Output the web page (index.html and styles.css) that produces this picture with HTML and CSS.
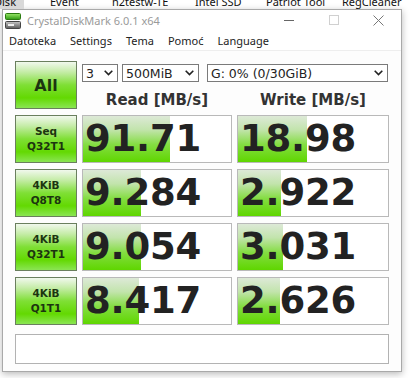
FILE: index.html
```html
<!DOCTYPE html>
<html>
<head>
<meta charset="utf-8">
<link rel="stylesheet" href="styles.css">
</head>
<body>
<div class="desk">
  <div class="desk-row">
    <span class="task t-disk"><span class="hl">Disk</span></span>
    <span class="task t-event">Event</span>
    <span class="task t-h2">h2testw-TE</span>
    <span class="task t-intel">Intel SSD</span>
    <span class="task t-patriot">Patriot Tool</span>
    <span class="task">RegCleaner</span>
  </div>
</div>
<div class="win">
  <div class="title">
    <svg class="appicon" width="16" height="16" viewBox="0 0 16 16">
      <defs>
        <linearGradient id="g1" x1="0" y1="0" x2="0" y2="1">
          <stop offset="0" stop-color="#9be86a"/>
          <stop offset="1" stop-color="#2e9a12"/>
        </linearGradient>
        <linearGradient id="g2" x1="0" y1="0" x2="0" y2="1">
          <stop offset="0" stop-color="#c8c8c8"/>
          <stop offset="1" stop-color="#5a5a5a"/>
        </linearGradient>
      </defs>
      <rect x="0.5" y="0.5" width="15" height="6" rx="1" fill="url(#g1)" stroke="#2a7a10" stroke-width="1"/>
      <rect x="0.5" y="8.5" width="15" height="7" rx="1" fill="url(#g2)" stroke="#444" stroke-width="1"/>
      <rect x="3" y="11" width="6" height="2" fill="#eee"/>
    </svg>
    <span class="ttext">CrystalDiskMark 6.0.1 x64</span>
    <div class="ctrls">
      <div class="cbtn"><svg width="10" height="10" viewBox="0 0 10 10"><path d="M0 5.5H10" stroke="#666" stroke-width="1"/></svg></div>
      <div class="cbtn"><svg width="10" height="10" viewBox="0 0 10 10"><rect x="0.5" y="0.5" width="9" height="9" fill="none" stroke="#d0d0d0" stroke-width="1"/></svg></div>
      <div class="cbtn"><svg width="11" height="11" viewBox="0 0 11 11"><path d="M0.5 0.5L10.5 10.5M10.5 0.5L0.5 10.5" stroke="#777" stroke-width="1"/></svg></div>
    </div>
  </div>
  <div class="menu">
    <span>Datoteka</span>
    <span>Settings</span>
    <span>Tema</span>
    <span>Pomoć</span>
    <span>Language</span>
  </div>
  <div class="client">
    <div class="grid">
      <div class="btn all">All</div>
      <div class="top">
        <div class="selects">
          <div class="sel sel-count"><span>3</span><svg class="chev" width="9" height="6" viewBox="0 0 9 6"><path d="M0.7 0.7L4.5 4.5L8.3 0.7" fill="none" stroke="#222" stroke-width="1.6"/></svg></div>
          <div class="sel sel-size"><span>500MiB</span><svg class="chev" width="9" height="6" viewBox="0 0 9 6"><path d="M0.7 0.7L4.5 4.5L8.3 0.7" fill="none" stroke="#222" stroke-width="1.6"/></svg></div>
          <div class="sel sel-drive"><span>G: 0% (0/30GiB)</span><svg class="chev" width="9" height="6" viewBox="0 0 9 6"><path d="M0.7 0.7L4.5 4.5L8.3 0.7" fill="none" stroke="#222" stroke-width="1.6"/></svg></div>
        </div>
        <div class="heads">
          <div>Read [MB/s]</div>
          <div>Write [MB/s]</div>
        </div>
      </div>

      <div class="btn test">Seq<br>Q32T1</div>
      <div class="cell" style="background-size:87px 100%">91.71</div>
      <div class="cell" style="background-size:69px 100%">18.98</div>

      <div class="btn test">4KiB<br>Q8T8</div>
      <div class="cell" style="background-size:58px 100%">9.284</div>
      <div class="cell" style="background-size:43px 100%">2.922</div>

      <div class="btn test">4KiB<br>Q32T1</div>
      <div class="cell" style="background-size:58px 100%">9.054</div>
      <div class="cell" style="background-size:45px 100%">3.031</div>

      <div class="btn test">4KiB<br>Q1T1</div>
      <div class="cell" style="background-size:56px 100%">8.417</div>
      <div class="cell" style="background-size:42px 100%">2.626</div>
    </div>
    <div class="status"></div>
  </div>
</div>
</body>
</html>
```

FILE: styles.css
```css
html, body {
  margin: 0;
  padding: 0;
}
body {
  width: 411px;
  height: 378px;
  overflow: hidden;
  background: #ffffff;
  font-family: "DejaVu Sans", sans-serif;
}

/* desktop strip behind the window */
.desk {
  height: 9px;
  overflow: hidden;
  font-family: "Noto Sans", sans-serif;
  font-size: 11px;
  color: #111;
}
.desk-row {
  display: flex;
  margin-top: -6px;
  line-height: 15px;
  white-space: nowrap;
}
.task { flex-shrink: 0; }
.t-disk { margin-left: -6px; width: 56px; }
.t-disk .hl { background: #d9d9d9; padding-right: 8px; }
.t-event { width: 62px; }
.t-h2 { width: 83px; }
.t-intel { width: 71px; }
.t-patriot { width: 76px; }

/* window */
.win {
  margin-left: 2px;
  width: 400px;
  height: 363px;
  box-sizing: border-box;
  border: 1px solid #a9a9a9;
  background: #ffffff;
  box-shadow: 0 2px 7px rgba(0,0,0,0.28);
  display: flex;
  flex-direction: column;
}
.title {
  height: 20px;
  display: flex;
  align-items: center;
  font-family: "Noto Sans", sans-serif;
  font-size: 11px;
  color: #9a9a9a;
}
.appicon { margin-left: 2px; margin-top: 1px; flex-shrink: 0; }
.ttext { margin-left: 6px; }
.ctrls { margin-left: auto; display: flex; height: 20px; }
.cbtn {
  width: 45px;
  height: 20px;
  display: flex;
  align-items: center;
  justify-content: center;
}

.menu {
  height: 20px;
  display: flex;
  align-items: center;
  gap: 14px;
  padding-left: 6px;
  font-family: "Noto Sans", sans-serif;
  font-size: 11px;
  color: #222;
}

.client {
  flex: 1;
  border-top: 1px solid #eeeeee;
  background: #fdfdfd;
  padding: 10px 0 0 12px;
}
.grid {
  display: grid;
  grid-template-columns: 62px 150px 152px;
  grid-auto-rows: 48px;
  column-gap: 5px;
  row-gap: 6px;
}
.btn {
  box-sizing: border-box;
  border: 1px solid #6a7f5e;
  background: linear-gradient(#f1f8ed 0%, #c4eca6 22%, #7fdf35 50%, #63d902 78%, #8ae553 100%);
  color: #1c3410;
  font-weight: bold;
  display: flex;
  align-items: center;
  justify-content: center;
  text-align: center;
}
.all { font-size: 16px; }
.test { font-size: 10.5px; line-height: 15px; }

.top {
  grid-column: 2 / 4;
  display: flex;
  flex-direction: column;
}
.selects {
  display: flex;
  margin-top: 3px;
  height: 18px;
}
.sel {
  box-sizing: border-box;
  height: 18px;
  border: 1px solid #7a7a7a;
  background: #fff;
  display: flex;
  align-items: center;
  padding-left: 3px;
  padding-right: 4px;
  font-size: 12.5px;
  color: #222;
}
.sel .chev { margin-left: auto; }
.sel-count { width: 36px; }
.sel-size { width: 77px; margin-left: 4px; }
.sel-drive { width: 181px; margin-left: 8px; }

.heads {
  display: grid;
  grid-template-columns: 150px 152px;
  column-gap: 5px;
  margin-top: 9px;
  font-size: 15px;
  font-weight: bold;
  color: #333;
  text-align: center;
  line-height: 18px;
}

.cell {
  box-sizing: border-box;
  border: 1px solid #b9b9b9;
  background-color: #ffffff;
  background-image: linear-gradient(#dde9d7 0%, #c2e4ac 30%, #84dd42 62%, #5fd600 100%);
  background-repeat: no-repeat;
  background-position: left top;
  font-size: 37px;
  font-weight: bold;
  color: #222;
  display: flex;
  align-items: center;
  padding-left: 2px;
  padding-bottom: 2px;
  letter-spacing: -0.2px;
}

.status {
  margin-top: 9px;
  width: 374px;
  height: 30px;
  box-sizing: border-box;
  border: 1px solid #b2b2b2;
  background: #fff;
}
```
